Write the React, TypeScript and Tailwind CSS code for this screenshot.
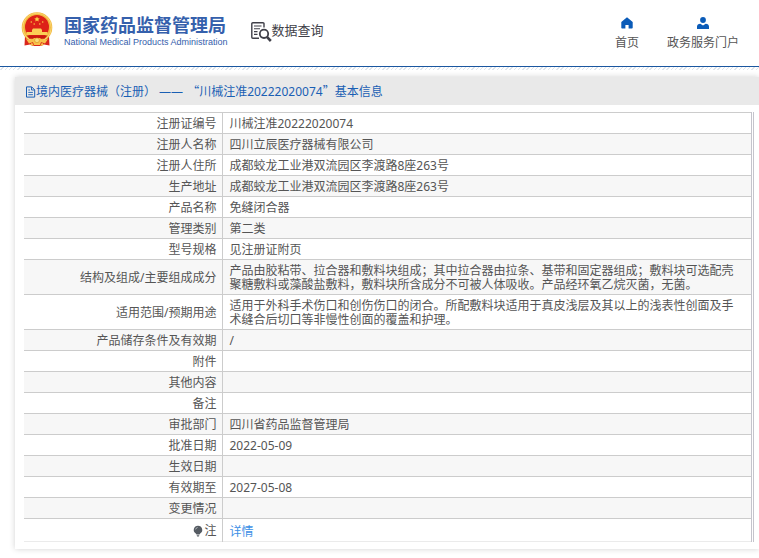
import type { ReactNode } from "react";

type Row = {
  label: ReactNode;
  value?: ReactNode;
};

const rows: Row[] = [
  { label: "注册证编号", value: "川械注准20222020074" },
  { label: "注册人名称", value: "四川立辰医疗器械有限公司" },
  { label: "注册人住所", value: "成都蛟龙工业港双流园区李渡路8座263号" },
  { label: "生产地址", value: "成都蛟龙工业港双流园区李渡路8座263号" },
  { label: "产品名称", value: "免缝闭合器" },
  { label: "管理类别", value: "第二类" },
  { label: "型号规格", value: "见注册证附页" },
  {
    label: "结构及组成/主要组成成分",
    value:
      "产品由胶粘带、拉合器和敷料块组成；其中拉合器由拉条、基带和固定器组成；敷料块可选配壳聚糖敷料或藻酸盐敷料，敷料块所含成分不可被人体吸收。产品经环氧乙烷灭菌，无菌。",
  },
  {
    label: "适用范围/预期用途",
    value:
      "适用于外科手术伤口和创伤伤口的闭合。所配敷料块适用于真皮浅层及其以上的浅表性创面及手术缝合后切口等非慢性创面的覆盖和护理。",
  },
  { label: "产品储存条件及有效期", value: "/" },
  { label: "附件" },
  { label: "其他内容" },
  { label: "备注" },
  { label: "审批部门", value: "四川省药品监督管理局" },
  { label: "批准日期", value: "2022-05-09" },
  { label: "生效日期" },
  { label: "有效期至", value: "2027-05-08" },
  { label: "变更情况" },
];

function Emblem() {
  return (
    <svg viewBox="0 0 32 35" className="h-[35px] w-8" aria-hidden="true">
      <path d="M4 24 L3.5 33.5 L9 32.5 L12 34 H20 L23 32.5 L28.5 33.5 L28 24 Z" fill="#d9261c" />
      <circle cx="16" cy="15.5" r="15.3" fill="#f3b83f" />
      <circle cx="16" cy="15.5" r="14.3" fill="none" stroke="#f9d672" strokeWidth="1" />
      <circle cx="16" cy="15" r="12" fill="#dd2118" />
      <path
        d="M16 4.5l.8 1.7 1.9.2-1.4 1.3.4 1.9-1.7-1-1.7 1 .4-1.9-1.4-1.3 1.9-.2z"
        fill="#fbd348"
      />
      <circle cx="10.3" cy="10" r="0.8" fill="#f8c440" />
      <circle cx="13.2" cy="12" r="0.8" fill="#f8c440" />
      <circle cx="18.8" cy="12" r="0.8" fill="#f8c440" />
      <circle cx="21.7" cy="10" r="0.8" fill="#f8c440" />
      <path d="M11 18l1-1.5h8l1 1.5v2h5.5v3h-21v-3H11z" fill="#fbce55" />
      <path d="M5.5 23.6h21l-3 3.2h-15z" fill="#c9180f" />
      <path d="M5 27c4 2 6.5 1 8-1h6c1.5 2 4 3 8 1l-3 4.5-4-1.500-1 3h-6l-1-3-4 1.500z" fill="#f8c14a" />
      <circle cx="16" cy="28.3" r="2.4" fill="#fbdc78" stroke="#d88b1c" strokeWidth="0.6" />
      <path d="M9 33l2-2.500 2 3.500zM23 33l-2-2.500-2 3.500z" fill="#f8c14a" />
    </svg>
  );
}

function QueryIcon() {
  return (
    <svg viewBox="0 0 21 20" className="h-5 w-[21px]" fill="none" stroke="#3f3f48" aria-hidden="true">
      <path d="M13 5.5V1.7a1 1 0 0 0-1-1H1.8a1 1 0 0 0-1 1v13.6a1 1 0 0 0 1 1H8" strokeWidth="1.4" />
      <path d="M3 4h7.5M3 6.8h6M3 9.6h3.5M3 12.4h3.5" strokeWidth="1.1" />
      <circle cx="13" cy="11.8" r="4.2" strokeWidth="1.8" />
      <path d="M16.2 15.2l3.6 3.8" strokeWidth="2.6" />
    </svg>
  );
}

function HomeIcon() {
  return (
    <svg viewBox="0 0 12 12" className="size-3" fill="#0a5bb8" aria-hidden="true">
      <path d="M6 0.3L0.3 5.1v5.700c0 .5.3.8.8.8H4.400V8h3.200v3.600h3.300c.5 0 .8-.3.8-.8V5.100z" />
    </svg>
  );
}

function UserIcon() {
  return (
    <svg viewBox="0 0 12 12" className="size-3" fill="#0a5bb8" aria-hidden="true">
      <circle cx="6" cy="3" r="2.9" />
      <path d="M0 12V9.500C0 7.800 1.300 7 3.300 6.700L6 8.600l2.700-1.900C10.700 7 12 7.800 12 9.500V12z" />
    </svg>
  );
}

function DocIcon() {
  return (
    <svg viewBox="0 0 11 12" className="h-3 w-[11px]" fill="none" stroke="#1a5fb4" aria-hidden="true">
      <path d="M1.5 0.9h5.2l3 3v7.2H1.5z" />
      <path d="M6.5 1v3h3M3.3 4h1.7M3.3 6.4h4.6M3.3 8.7h4.6" strokeWidth="0.9" />
    </svg>
  );
}

function BulbIcon() {
  return (
    <svg viewBox="0 0 10 12" className="h-3 w-[10px]" aria-hidden="true">
      <path d="M5 .8a4.2 4.2 0 0 0-2.2 7.8l.7 1h3l.7-1A4.2 4.2 0 0 0 5 .8z" fill="#555b62" />
      <path d="M3.6 10.3h2.8l-.6 1.2H4.2z" fill="#555b62" />
      <path d="M2.6 4.4A2.4 2.4 0 0 1 4.6 2.5" stroke="#c9cdd1" strokeWidth="0.8" fill="none" />
    </svg>
  );
}

function InfoRow({ label, value }: Row) {
  return (
    <tr className="border-t border-[#cccccc] even:bg-[#f7f7f7]">
      <th scope="row" className="border-r border-[#cccccc] pt-1 pr-[5px] pb-0.5 text-right font-normal">
        {label}
      </th>
      <td className="h-5 pt-1 pr-3 pb-0.5 pl-[7px]">{value}</td>
    </tr>
  );
}

export default function App() {
  return (
    <div
      lang="zh-CN"
      className="bg-white pb-2 font-['Noto_Sans','Noto_Sans_CJK_SC',sans-serif] text-xs leading-[14px] text-[#555555]"
    >
      <header className="flex h-[67px] items-start border-b border-[#1b57a0] pr-5 pl-[21px]">
        <a href="#" className="flex items-start gap-[11px] pt-3 text-[#3560ac]">
          <Emblem />
          <span className="flex flex-col pt-[3px]">
            <span className="text-[18px] leading-5 font-bold">国家药品监督管理局</span>
            <span className="font-['Liberation_Sans',sans-serif] text-[9px] leading-[14px]">
              National Medical Products Administration
            </span>
          </span>
        </a>
        <a href="#" className="ml-[23px] flex items-start pt-[22px] text-[#3f3f48]">
          <QueryIcon />
          <span className="text-[13px] leading-4">数据查询</span>
        </a>
        <nav className="ml-auto flex gap-7 pt-[17px]">
          <a href="#" className="flex flex-col items-center gap-[7px]">
            <HomeIcon />
            首页
          </a>
          <a href="#" className="flex flex-col items-center gap-[7px]">
            <UserIcon />
            政务服务门户
          </a>
        </nav>
      </header>
      <div className="h-[3px] bg-[repeating-linear-gradient(135deg,#ffffff_0px,#ffffff_2px,#dfe5ec_2px,#dfe5ec_3px)]" />

      <main className="mt-[7px] ml-[15px] pb-[7px] shadow-[0_0_6px_rgba(0,0,0,0.18)]">
        <h1 className="flex h-7 items-center bg-[#e9e9e9] pt-px pl-2.5 text-[#1a5fb4]">
          <DocIcon />
          <span>
            境内医疗器械（注册） ——
            <span className="ml-1 font-['Noto_Sans_CJK_SC',sans-serif]">“</span>
            川械注准20222020074
            <span className="font-['Noto_Sans_CJK_SC',sans-serif]">”</span>
            基本信息
          </span>
        </h1>
        <div className="mt-[7px] mr-[5px] ml-[9px] border-r-[3px] border-double border-[#c4c4cc]">
          <table className="w-full table-fixed border-collapse">
            <colgroup>
              <col className="w-[198px]" />
              <col />
            </colgroup>
            <tbody className="border-b border-[#ebebeb]">
              {rows.map((row, i) => (
                <InfoRow key={i} {...row} />
              ))}
              <tr className="border-t border-[#cccccc]">
                <th scope="row" className="border-r border-[#cccccc] pt-0.5 pr-[5px] font-normal">
                  <span className="flex items-center justify-end gap-px">
                    <BulbIcon />注
                  </span>
                </th>
                <td className="h-[23px] pt-1 pl-[7px]">
                  <a href="#" className="text-[#3c8fe6]">
                    详情
                  </a>
                </td>
              </tr>
            </tbody>
          </table>
        </div>
      </main>
    </div>
  );
}
